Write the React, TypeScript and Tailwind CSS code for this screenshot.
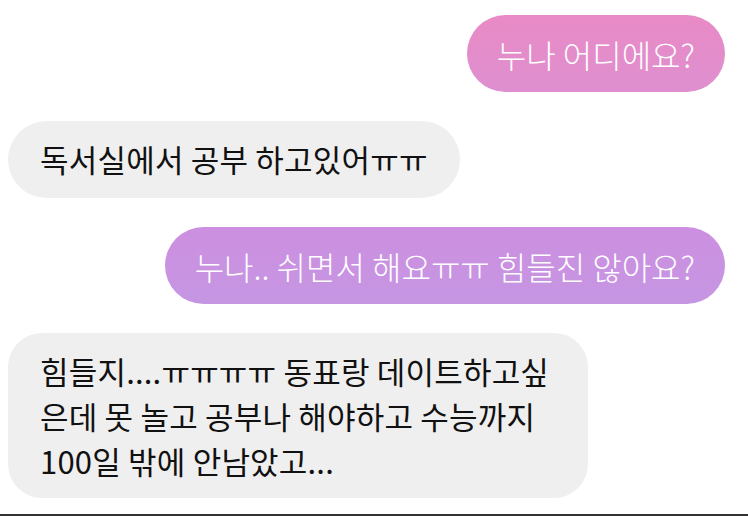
import React from 'react';

const font = { fontFamily: '"Noto Sans CJK KR", "Noto Sans", sans-serif' };

const Mine = ({ text, tone }: { text: string; tone: 'pink' | 'purple' }) => (
  <div className="flex justify-end pr-[23px]">
    <div
      className={`h-[77px] flex items-center rounded-full px-[30px] text-[32px] font-light text-white whitespace-nowrap ${
        tone === 'pink'
          ? 'bg-gradient-to-b from-[#e88ac5] to-[#df8fd0]'
          : 'bg-gradient-to-b from-[#cd8fe0] to-[#c596e3]'
      }`}
    >
      {text}
    </div>
  </div>
);

const Theirs = ({ lines }: { lines: string[] }) => (
  <div className="flex justify-start pl-[8px]">
    <div
      className={`bg-[#efefef] text-[#111111] text-[31px] px-[32px] whitespace-nowrap tracking-[0.2px] ${
        lines.length > 1 ? 'rounded-[34px] py-[15px] leading-[45px] w-[580px]' : 'rounded-full h-[77px] flex items-center'
      }`}
    >
      {lines.map((l, i) => (
        <div key={i}>{l}</div>
      ))}
    </div>
  </div>
);

export default function App() {
  return (
    <div className="w-[748px] h-[516px] bg-white flex flex-col overflow-hidden" style={font}>
      <div className="flex-1 flex flex-col gap-[29px] pt-[15px]">
        <Mine text="누나 어디에요?" tone="pink" />
        <Theirs lines={['독서실에서 공부 하고있어ㅠㅠ']} />
        <Mine text="누나.. 쉬면서 해요ㅠㅠ 힘들진 않아요?" tone="purple" />
        <Theirs
          lines={[
            '힘들지....ㅠㅠㅠㅠ 동표랑 데이트하고싶',
            '은데 못 놀고 공부나 해야하고 수능까지',
            '100일 밖에 안남았고...',
          ]}
        />
      </div>
      <div className="h-[2px] bg-[#333333]" />
    </div>
  );
}
